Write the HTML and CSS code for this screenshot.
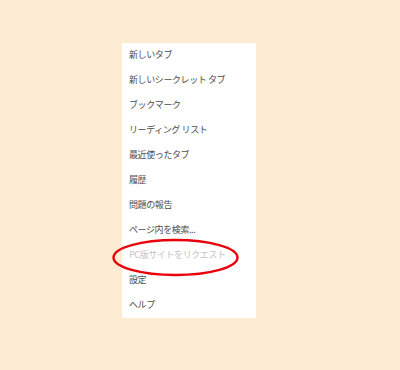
FILE: index.html
```html
<!DOCTYPE html>
<html lang="ja">
  <head>
    <meta charset="UTF-8" />
    <meta name="viewport" content="width=device-width, initial-scale=1.0" />
    <title>メニュー</title>
    <link rel="stylesheet" href="styles.css">
  </head>

  <body>
    <main class="page">
      <ul class="menu">
        <li class="menu-item">新しいタブ</li>
        <li class="menu-item">新しいシークレット タブ</li>
        <li class="menu-item">ブックマーク</li>
        <li class="menu-item">リーディング リスト</li>
        <li class="menu-item">最近使ったタブ</li>
        <li class="menu-item">履歴</li>
        <li class="menu-item">問題の報告</li>
        <li class="menu-item">ページ内を検索...</li>
        <li class="menu-item disabled">PC版サイトをリクエスト</li>
        <li class="menu-item">設定</li>
        <li class="menu-item">ヘルプ</li>
        <svg class="highlight" width="129" height="39" viewBox="0 0 129 39">
          <ellipse cx="64.5" cy="19.5" rx="62" ry="17.5" fill="none" stroke="#e8000b" stroke-width="2.4" />
        </svg>
      </ul>
    </main>
  </body>
</html>
```

FILE: styles.css
```css
* {
  padding: 0;
  margin: 0;
  box-sizing: border-box;
}

body {
  width: 400px;
  height: 370px;
  background-color: #feebd3;
  font-family: "Noto Sans CJK JP", "Liberation Sans", sans-serif;
}

.page {
  padding: 43px 0 0 122px;
}

.menu {
  position: relative;
  list-style: none;
  width: 134px;
  background-color: #ffffff;
}

.menu-item {
  height: 25px;
  padding: 0 0 2px 7px;
  line-height: 23px;
  font-size: 9px;
  letter-spacing: -0.4px;
  color: #4d4d4d;
  white-space: nowrap;
}

.menu-item.disabled {
  color: #c4c4c4;
}

.highlight {
  position: absolute;
  left: -11px;
  top: 195px;
}
```
